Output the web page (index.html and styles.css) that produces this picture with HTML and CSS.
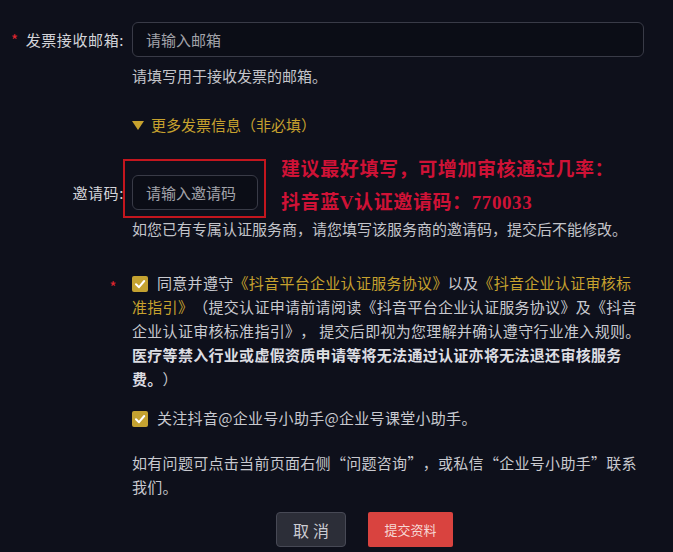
FILE: index.html
```html
<!DOCTYPE html>
<html lang="zh-CN">
<head>
    <meta charset="UTF-8">
    <title>企业认证 - 发票信息</title>
    <link rel="stylesheet" href="styles.css">
</head>
<body>
<div class="form">

    <div class="row first">
        <label class="label" for="email"><span class="req">*</span>发票接收邮箱:</label>
        <div class="control">
            <input id="email" class="input" type="text" placeholder="请输入邮箱">
        </div>
    </div>
    <div class="row offset hint-row">
        <p class="hint">请填写用于接收发票的邮箱。</p>
    </div>

    <div class="row offset toggle-row">
        <span class="toggle"><i class="caret"></i>更多发票信息（非必填）</span>
    </div>

    <div class="row invite-row">
        <label class="label" for="invite">邀请码:</label>
        <div class="control">
            <div class="invite-field">
                <input id="invite" class="input input-small" type="text" placeholder="请输入邀请码">
                <div class="mark-box"></div>
                <div class="mark-text">
                    建议最好填写，可增加审核通过几率：<br>
                    抖音蓝V认证邀请码：770033
                </div>
            </div>
        </div>
    </div>
    <div class="row offset hint-row">
        <p class="hint">如您已有专属认证服务商，请您填写该服务商的邀请码，提交后不能修改。</p>
    </div>

    <div class="row agree-row">
        <span class="label star-cell"><span class="req">*</span></span>
        <div class="control">
            <p class="agree">
                <span class="check"><svg width="16" height="16" viewBox="0 0 16 16"><rect width="16" height="16" rx="2" fill="#c4a231"/><polyline points="4,8.3 7,11.2 12.2,5" fill="none" stroke="#fff" stroke-width="2" stroke-linecap="round" stroke-linejoin="round"/></svg></span>同意并遵守<a class="link">《抖音平台企业认证服务协议》</a>以及<a class="link">《抖音企业认证审核标准指引》</a>（提交认证申请前请阅读《抖音平台企业认证服务协议》及《抖音企业认证审核标准指引》， 提交后即视为您理解并确认遵守行业准入规则。<b>医疗等禁入行业或虚假资质申请等将无法通过认证亦将无法退还审核服务费。</b>）
            </p>
        </div>
    </div>

    <div class="row offset follow-row">
        <p class="agree">
            <span class="check"><svg width="16" height="16" viewBox="0 0 16 16"><rect width="16" height="16" rx="2" fill="#c4a231"/><polyline points="4,8.3 7,11.2 12.2,5" fill="none" stroke="#fff" stroke-width="2" stroke-linecap="round" stroke-linejoin="round"/></svg></span>关注抖音@企业号小助手@企业号课堂小助手。
        </p>
    </div>

    <div class="row offset help-row">
        <p class="help">如有问题可点击当前页面右侧“问题咨询”，或私信“企业号小助手”联系我们。</p>
    </div>

    <div class="actions">
        <button class="btn btn-cancel">取消</button>
        <button class="btn btn-submit">提交资料</button>
    </div>

</div>
</body>
</html>
```

FILE: styles.css
```css
html, body {
    margin: 0;
    padding: 0;
    background: #0e101b;
}

body {
    font-family: "Noto Sans CJK SC", "Microsoft YaHei", sans-serif;
    font-size: 15px;
    color: #c8c9cf;
    text-spacing-trim: space-all;
}

p {
    margin: 0;
}

.form {
    padding: 22px 29px 0 0;
}

.row {
    display: flex;
    align-items: center;
}

.offset {
    padding-left: 132px;
}

.label {
    width: 124px;
    margin-right: 8px;
    text-align: right;
    line-height: 22px;
    letter-spacing: 0.6px;
    color: #d3d4d9;
    white-space: nowrap;
}

.req {
    color: #e0262f;
    margin-right: 7px;
}

.control {
    flex: 1;
    min-width: 0;
}

.input {
    display: block;
    box-sizing: border-box;
    width: 100%;
    height: 35px;
    padding: 0 13px;
    border: 1px solid #393b47;
    border-radius: 6px;
    background: #0b0d16;
    color: #d3d4d9;
    font-family: inherit;
    font-size: 15px;
    outline: none;
}

.input::placeholder {
    color: #a2a3aa;
}

.input-small {
    width: 126px;
}

.hint-row {
    margin-top: 8px;
}

.hint {
    line-height: 22px;
    color: #c3c4ca;
}

.toggle-row {
    margin-top: 27px;
}

.toggle {
    display: inline-flex;
    align-items: center;
    line-height: 22px;
    color: #c6a12e;
}

.caret {
    width: 0;
    height: 0;
    border-left: 6px solid transparent;
    border-right: 6px solid transparent;
    border-top: 9px solid #c6a12e;
    margin-right: 7px;
}

.invite-row {
    margin-top: 39px;
}

.invite-field {
    position: relative;
}

.mark-box {
    position: absolute;
    left: -9px;
    top: -16px;
    width: 143px;
    height: 59px;
    box-sizing: border-box;
    border: 2px solid #c3161e;
    pointer-events: none;
}

.mark-text {
    position: absolute;
    left: 149px;
    top: -22px;
    white-space: nowrap;
    font-family: "Liberation Serif", "Noto Sans CJK SC", serif;
    font-size: 19px;
    font-weight: bold;
    line-height: 33px;
    letter-spacing: 0.6px;
    color: #cf1236;
}

.agree-row {
    margin-top: 31px;
    align-items: flex-start;
}

.star-cell {
    line-height: 24px;
    padding-right: 11px;
    margin-right: -3px;
    padding-top: 4px;
    box-sizing: border-box;
    width: 135px;
}

.agree {
    max-width: 510px;
    line-height: 24px;
    letter-spacing: 0.3px;
    color: #c8c9cf;
}

.agree b {
    color: #dcdde2;
}

.link {
    color: #c6a12e;
}

.check {
    display: inline-block;
    width: 16px;
    height: 16px;
    margin-right: 9px;
    vertical-align: -3px;
}

.check svg {
    display: block;
}

.follow-row {
    margin-top: 15px;
}

.help-row {
    margin-top: 21px;
}

.help {
    max-width: 512px;
    line-height: 24px;
    letter-spacing: 0.3px;
    font-feature-settings: "fwid";
}

.actions {
    display: flex;
    gap: 22px;
    padding-left: 276px;
    margin-top: 13px;
}

.btn {
    height: 35px;
    box-sizing: border-box;
    font-family: inherit;
    cursor: pointer;
}

.btn-cancel {
    width: 70px;
    border: 1px solid #474955;
    border-radius: 4px;
    background: #2c2e38;
    color: #cbccd2;
    font-size: 16px;
    letter-spacing: 4px;
    padding: 0 0 0 4px;
}

.btn-submit {
    width: 85px;
    border: none;
    border-radius: 2px;
    background: #d9433f;
    color: #f6d8d5;
    font-size: 13px;
    padding: 0;
}
```
